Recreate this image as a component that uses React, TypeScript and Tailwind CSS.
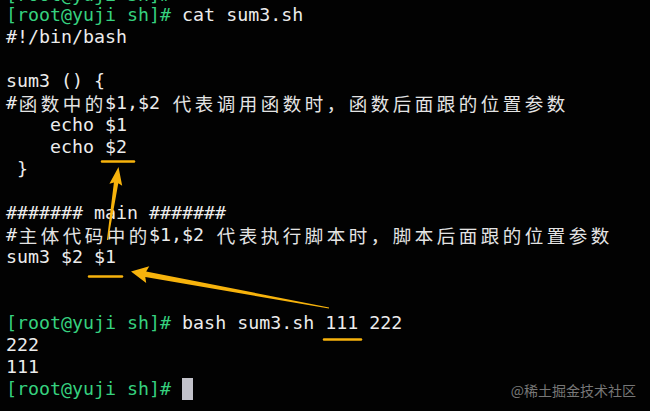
import React from 'react';

const PROMPT = '[root@yuji sh]# ';

type Line = { prompt?: boolean; text?: string; cursor?: boolean };

const LINES: Line[] = [
  { prompt: true },
  { prompt: true, text: 'cat sum3.sh' },
  { text: '#!/bin/bash' },
  { text: '' },
  { text: 'sum3 () {' },
  { text: '#函数中的$1,$2 代表调用函数时，函数后面跟的位置参数' },
  { text: '    echo $1' },
  { text: '    echo $2' },
  { text: ' }' },
  { text: '' },
  { text: '####### main #######' },
  { text: '#主体代码中的$1,$2 代表执行脚本时，脚本后面跟的位置参数' },
  { text: 'sum3 $2 $1' },
  { text: '' },
  { text: '' },
  { prompt: true, text: 'bash sum3.sh 111 222' },
  { text: '222' },
  { text: '111' },
  { prompt: true, cursor: true },
];

const isWide = (ch: string) => /[\u3000-\u9fff\uff00-\uffef]/.test(ch);

// terminal cells: ascii is 11px, cjk takes two cells
const Cells: React.FC<{ text: string }> = ({ text }) => {
  const parts: React.ReactNode[] = [];
  let run = '';
  Array.from(text).forEach((ch, i) => {
    if (isWide(ch)) {
      if (run) parts.push(<span key={`r${i}`}>{run}</span>);
      run = '';
      parts.push(
        <span
          key={`w${i}`}
          className="inline-block w-[22px] text-center text-[18.5px] text-[#e4e4e4] align-top"
          style={{ fontFamily: '"Noto Sans CJK SC", sans-serif' }}
        >
          {ch}
        </span>
      );
    } else {
      run += ch;
    }
  });
  if (run) parts.push(<span key="end">{run}</span>);
  return <>{parts}</>;
};

// tapered arrow polygon: thin at the tail, head at the tip
const arrowPoints = (
  tx: number, ty: number, hx: number, hy: number,
  headLen: number, headW: number, w0: number, w1: number
) => {
  const dx = hx - tx;
  const dy = hy - ty;
  const len = Math.hypot(dx, dy);
  const ux = dx / len;
  const uy = dy / len;
  const nx = -uy;
  const ny = ux;
  const bx = hx - ux * headLen;
  const by = hy - uy * headLen;
  const pts = [
    [tx + nx * w0 / 2, ty + ny * w0 / 2],
    [bx + nx * w1 / 2, by + ny * w1 / 2],
    [bx + nx * headW / 2 - ux * 2, by + ny * headW / 2 - uy * 2],
    [hx, hy],
    [bx - nx * headW / 2 - ux * 2, by - ny * headW / 2 - uy * 2],
    [bx - nx * w1 / 2, by - ny * w1 / 2],
    [tx - nx * w0 / 2, ty - ny * w0 / 2],
  ];
  return pts.map(p => p.map(v => v.toFixed(1)).join(',')).join(' ');
};

const YELLOW = '#f7b30c';

export default function App() {
  return (
    <div className="relative w-[650px] h-[411px] overflow-hidden bg-[#020202]">
      <div
        className="mt-[-16px] pl-[6px] text-[18.3px] leading-[22px] text-[#ececec] whitespace-pre"
        style={{ fontFamily: '"DejaVu Sans Mono", monospace' }}
      >
        {LINES.map((line, i) => (
          <div key={i} className={`flex items-start ${i === 0 ? 'h-[20px]' : 'h-[22px]'}`}>
            {line.prompt && <span className="text-[#36d17f]">{PROMPT}</span>}
            {line.text && <Cells text={line.text} />}
            {line.cursor && <span className="inline-block w-[11px] h-[22px] bg-[#c2c2ca]" />}
          </div>
        ))}
      </div>

      <svg className="absolute inset-0 pointer-events-none" width="650" height="411" viewBox="0 0 650 411">
        <g stroke={YELLOW} strokeWidth="2.5" strokeLinecap="round">
          <line x1="102" y1="161.5" x2="134" y2="161.5" />
          <line x1="89" y1="276.5" x2="122" y2="276.5" />
          <line x1="324" y1="339.5" x2="361" y2="339.5" />
        </g>
        <polygon points={arrowPoints(107.5, 240, 118.5, 167, 16, 13, 1.2, 4.5)} fill={YELLOW} />
        <polygon points={arrowPoints(329, 308, 131, 271.5, 15, 17, 1.2, 5.5)} fill={YELLOW} />
      </svg>

      <div
        className="absolute right-[14px] bottom-[14px] text-[14px] leading-none text-[#777777]"
        style={{ fontFamily: '"Noto Sans CJK SC", sans-serif' }}
      >
        @稀土掘金技术社区
      </div>
    </div>
  );
}
